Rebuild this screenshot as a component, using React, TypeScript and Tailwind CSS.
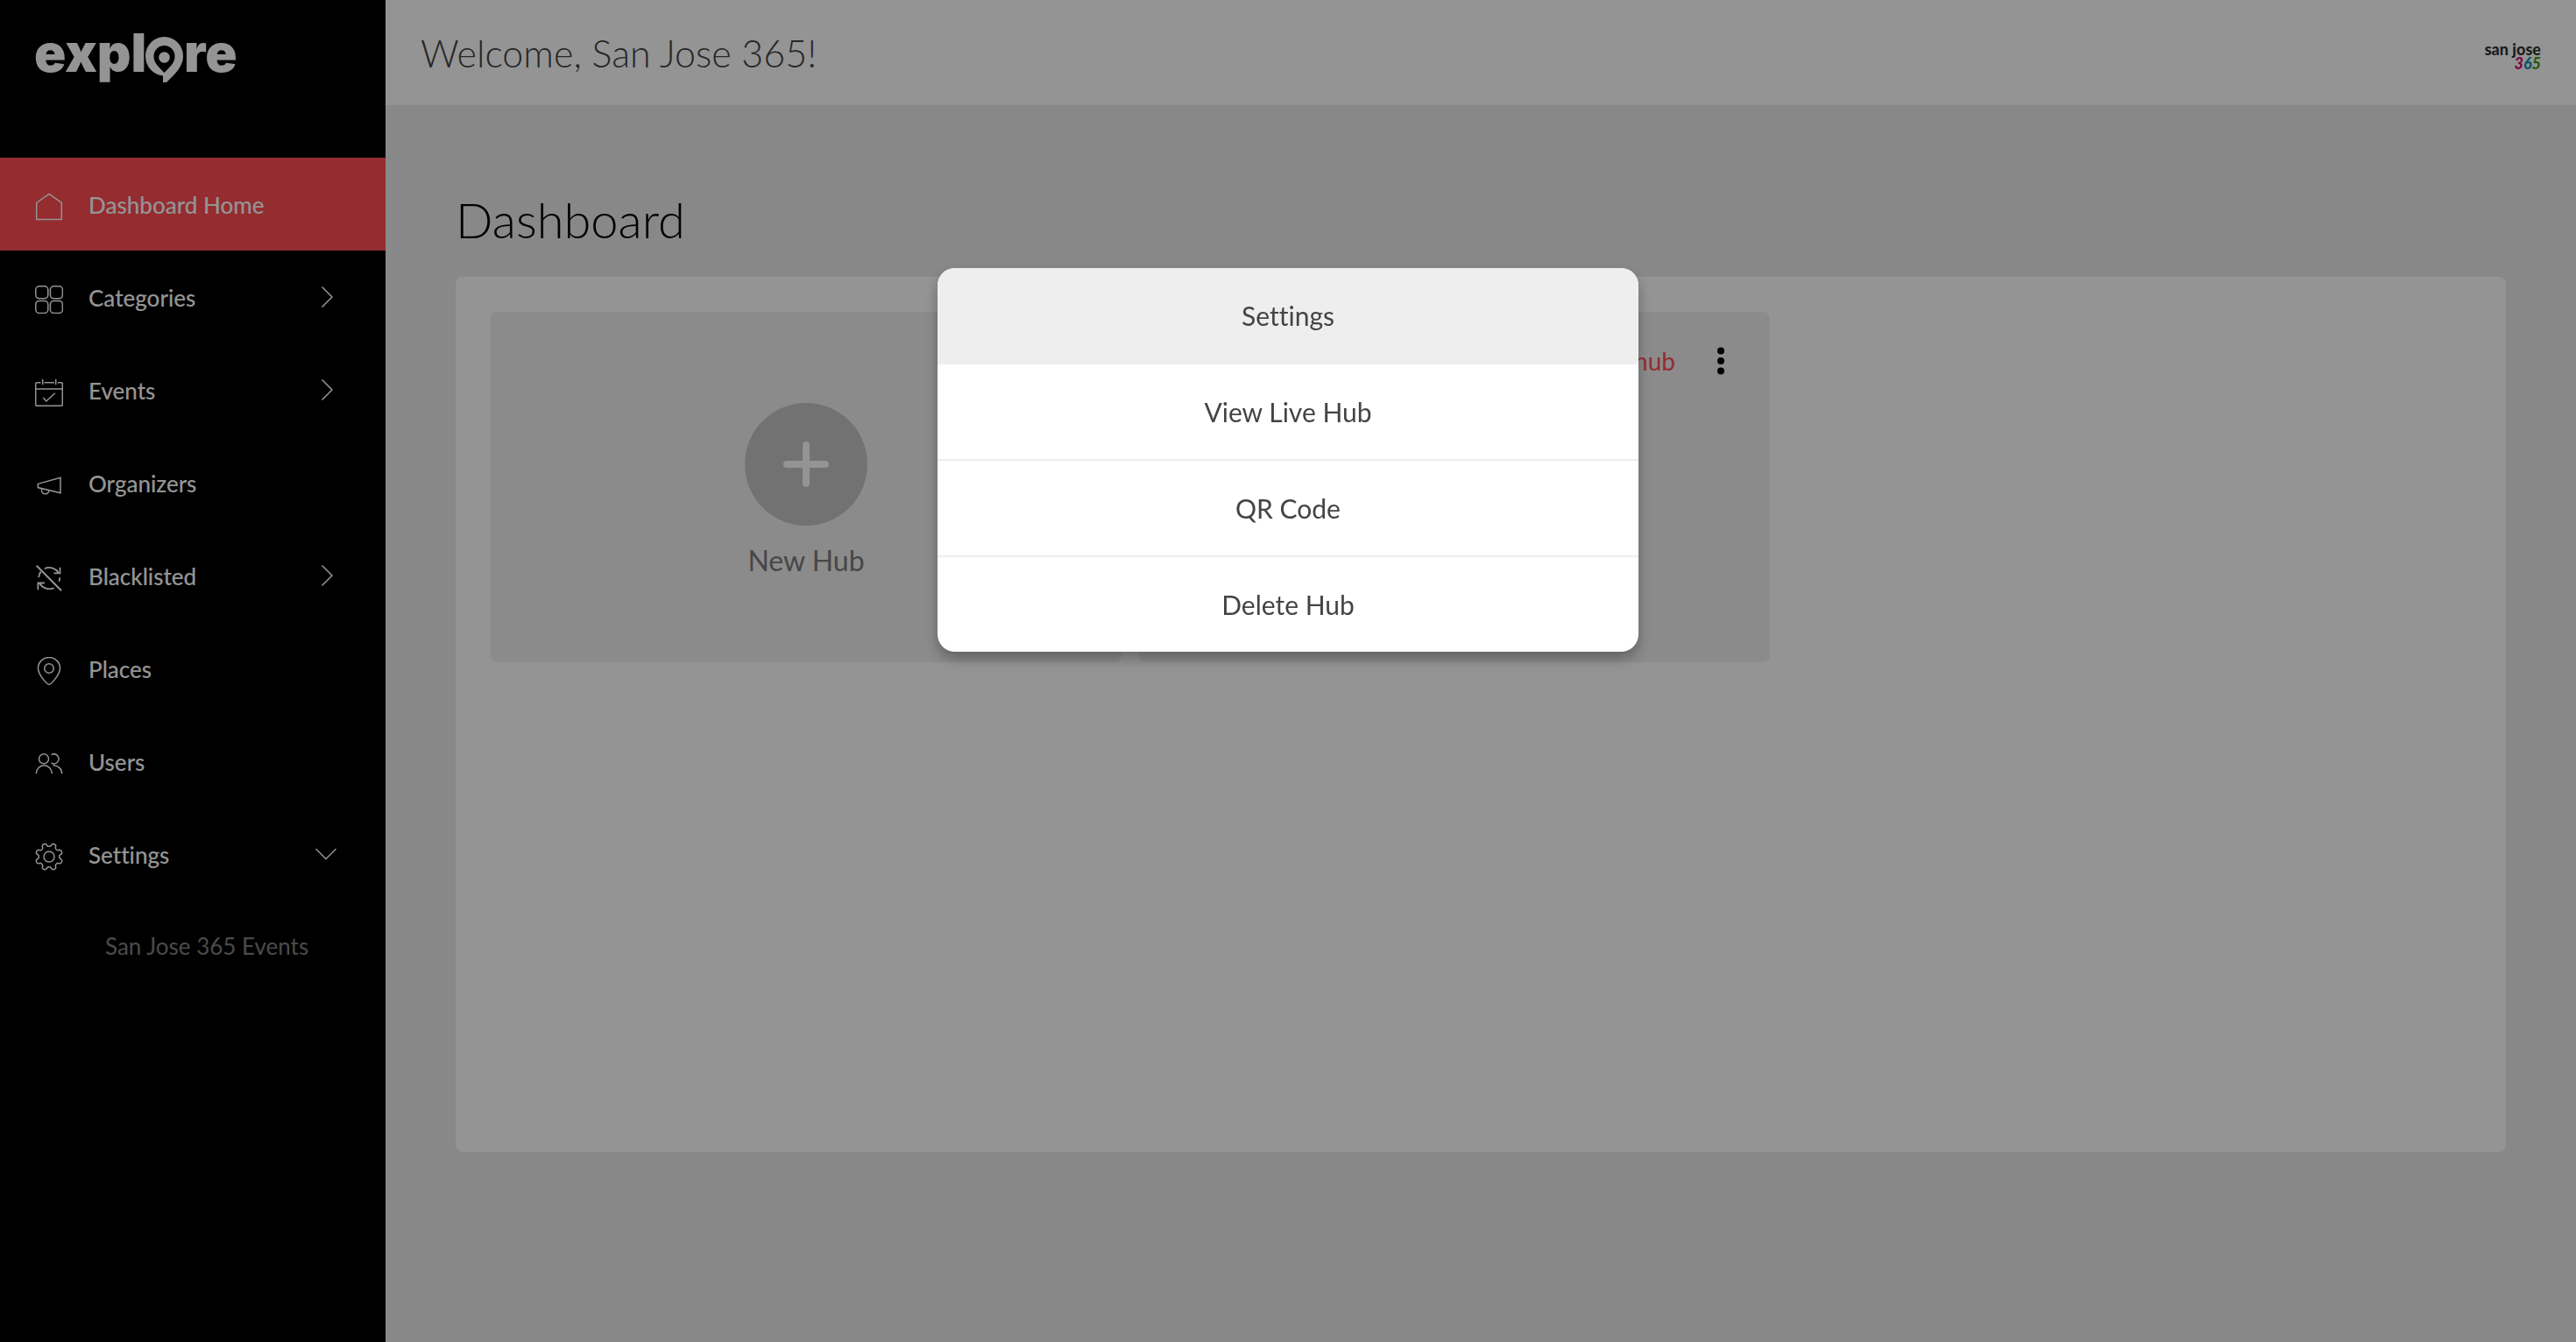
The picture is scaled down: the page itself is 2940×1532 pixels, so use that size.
import React from 'react';

// Eight rounded teeth around the centre of a 32px box
const gearPath =
  Array.from({ length: 144 }, (_, i) => {
    const angle = (i / 144) * Math.PI * 2;
    const radius = 13.6 - 1.9 * Math.tanh(2.2 * Math.cos(angle * 8));
    const x = 16 + radius * Math.sin(angle);
    const y = 16 - radius * Math.cos(angle);
    return `${i === 0 ? 'M' : 'L'}${x.toFixed(2)} ${y.toFixed(2)}`;
  }).join('') + 'Z';

const icons = {
  home: <path d="M1.7 11.5 16 1.3l14.3 10.2v19H1.7z" />,
  grid: (
    <>
      <rect x="0.8" y="0.8" width="14" height="14" rx="4" />
      <rect x="17.4" y="0.8" width="14" height="14" rx="4" />
      <rect x="0.8" y="17.4" width="14" height="14" rx="4" />
      <rect x="17.4" y="17.4" width="14" height="14" rx="4" />
    </>
  ),
  calendar: (
    <>
      <path d="M6.5 4.7H2.2A1.5 1.5 0 0 0 .7 6.2v23.6a1.5 1.5 0 0 0 1.5 1.5h27.6a1.5 1.5 0 0 0 1.5-1.5V6.2a1.5 1.5 0 0 0-1.5-1.5h-4M10.5 4.7h11.5M.7 12h30.6" />
      <path d="M8.7.7v6.6M23.7.7v6.6M9.3 22l3.5 4 10-9.3" />
    </>
  ),
  horn: (
    <>
      <path d="M3.3 14.4 29 7.3v17.4L3.3 18.6z" />
      <path d="M7.5 19.8v1.5a4.2 4.2 0 0 0 8.3 1.2v-.8" />
    </>
  ),
  blocked: (
    <>
      <path d="M1.7 1.7 30 30.3" strokeWidth="2" />
      <path d="M10.8 5.2C16.5 2.4 23 4.4 26.6 9.6M28.5 3.7v6.6h-7M4.2 15.2c.2-2.6 1-4.8 2.4-6.6" strokeWidth="1.8" />
      <path d="M21.6 27.2C15.5 30 8.5 27.5 5.2 22M3.4 29.3V21.5h7.5M28.2 15.2c0 1.8-.3 3.4-.9 4.8" strokeWidth="1.8" />
    </>
  ),
  pin: (
    <>
      <path d="M16 31.5C14.2 31.5 3.5 20.8 3.5 12.8a12.5 12.3 0 0 1 25 0C28.5 20.8 17.8 31.5 16 31.5z" />
      <circle cx="16" cy="13" r="5.3" />
    </>
  ),
  users: (
    <>
      <circle cx="10" cy="10.3" r="5.5" />
      <path d="M1.3 27.2a9 9.5 0 0 1 18 0M18.6 5.6a5.5 5.5 0 1 1 0 9.4M20.5 17.7a9.8 9.5 0 0 1 10.2 9.5" />
    </>
  ),
  gear: (
    <>
      <path d={gearPath} />
      <circle cx="16" cy="16" r="6" />
    </>
  ),
};

type NavItem = {
  label: string;
  icon: keyof typeof icons;
  active?: boolean;
  arrow?: 'right' | 'down';
};

const navItems: NavItem[] = [
  { label: 'Dashboard Home', icon: 'home', active: true },
  { label: 'Categories', icon: 'grid', arrow: 'right' },
  { label: 'Events', icon: 'calendar', arrow: 'right' },
  { label: 'Organizers', icon: 'horn' },
  { label: 'Blacklisted', icon: 'blocked', arrow: 'right' },
  { label: 'Places', icon: 'pin' },
  { label: 'Users', icon: 'users' },
  { label: 'Settings', icon: 'gear', arrow: 'down' },
];

const menuItems = ['Settings', 'View Live Hub', 'QR Code', 'Delete Hub'];

function Logo() {
  return (
    <a href="#home" aria-label="explore" className="block w-[240px] text-white">
      <svg viewBox="-4 -16 240 88" className="w-full" fill="currentColor">
        <text x="-1" y="48" className="font-['Inter',sans-serif] text-[60px] font-black">
          expl
        </text>
        <text x="170" y="48" className="font-['Inter',sans-serif] text-[60px] font-black">
          re
        </text>
        <path
          fillRule="evenodd"
          d="M147.5 8a21.5 22 0 0 1 21.5 22c0 9-5.5 16-10 21l-9 9h-4v-7.5A22 22.5 0 0 1 126 30 21.5 22 0 0 1 147.500 8zm0 10a12 12 0 0 0-12 12.5c0 7.500 6 12 12 18.500 6-6.500 12-11 12-18.500a12 12 0 0 0-12-12.500z"
        />
        <circle cx="147.5" cy="31.5" r="6.3" />
      </svg>
    </a>
  );
}

function Sidebar() {
  return (
    <aside className="w-[440px] shrink-0 bg-black text-[26px] text-white">
      <div className="h-[180px] px-9 pt-[18px]">
        <Logo />
      </div>
      <nav>
        {navItems.map((item) => (
          <a
            key={item.label}
            href="#nav"
            className={`flex h-[106px] items-center pr-14 pl-10 ${item.active ? 'bg-[#ff4c53]' : ''}`}
          >
            <svg
              viewBox="0 0 32 32"
              className="mt-1.5 mr-[29px] size-8 shrink-0"
              fill="none"
              stroke="currentColor"
              strokeWidth="1.5"
            >
              {icons[item.icon]}
            </svg>
            <span className="flex-1 pt-0.5 font-medium">{item.label}</span>
            {item.arrow && (
              <svg viewBox="0 0 24 24" className="size-6" fill="none" stroke="currentColor" strokeWidth="1.5">
                <path d={item.arrow === 'right' ? 'M7.5.5 19 12 7.5 23.5' : 'M.5 6 12 17.5 23.5 6'} />
              </svg>
            )}
          </a>
        ))}
        <a href="#events" className="flex h-[104px] items-center pl-[120px] text-[#808080]">
          San Jose 365 Events
        </a>
      </nav>
    </aside>
  );
}

function Header() {
  return (
    <header className="flex h-[120px] items-center justify-between bg-white px-10">
      <p className="pt-0.5 text-[43px] font-light text-[#444]">Welcome, San Jose 365!</p>
      <div className="flex flex-col items-end pt-2 text-[18px] leading-4 font-black">
        <span className="text-[#333]">san jose</span>
        <span className="italic">
          <span className="text-[#d0107c]">3</span>
          <span className="text-[#168fae]">6</span>
          <span className="text-[#3f9c22]">5</span>
        </span>
      </div>
    </header>
  );
}

function Hubs() {
  return (
    <main className="px-20 pt-[92px]">
      <h1 className="text-[56px] leading-[78px] font-light text-black">Dashboard</h1>
      <section className="mt-[26px] flex min-h-[999px] items-start gap-5 rounded-lg bg-white p-10">
        <button className="flex h-[400px] w-[720px] flex-col items-center rounded-lg bg-[#f0f0f0] pt-[104px] text-[#7a7a7a]">
          <span className="flex size-[140px] items-center justify-center rounded-full bg-[#c4c4c4] text-white">
            <svg viewBox="0 0 52 52" className="size-13" stroke="currentColor" strokeWidth="8" strokeLinecap="round">
              <path d="M26 4v44M4 26h44" />
            </svg>
          </span>
          <span className="mt-5 text-[32px] leading-[40px]">New Hub</span>
        </button>
        <article className="flex h-[400px] w-[720px] items-start justify-end gap-9 rounded-lg bg-[#f0f0f0] py-9 pr-10">
          <h2 className="text-[28px] leading-[40px] text-[#ff4c53]">hub</h2>
          <button aria-label="Hub menu" className="flex h-10 w-8 items-center justify-center">
            <svg viewBox="0 0 8 32" className="h-8 w-2">
              <circle cx="4" cy="4.5" r="4" />
              <circle cx="4" cy="16" r="4" />
              <circle cx="4" cy="27.5" r="4" />
            </svg>
          </button>
        </article>
      </section>
    </main>
  );
}

export default function App() {
  return (
    <div className="flex min-h-screen bg-[#ebebeb] font-['Lato',sans-serif] [font-variant-ligatures:no-common-ligatures]">
      <Sidebar />
      <div className="flex-1">
        <Header />
        <Hubs />
      </div>

      {/* Hub actions */}
      <div className="fixed inset-0 flex items-start justify-center bg-black/42 pt-[306px]">
        <div
          role="dialog"
          aria-label="Hub actions"
          className="w-[800px] overflow-hidden rounded-[20px] bg-white shadow-[0_8px_16px_rgba(0,0,0,0.3)]"
        >
          {menuItems.map((label, index) => (
            <button
              key={label}
              className={`block h-[110px] w-full border-b-2 border-[#eee] text-[30px] text-[#444] last:h-[108px] last:border-b-0 ${index === 0 ? 'bg-[#eee]' : ''}`}
            >
              {label}
            </button>
          ))}
        </div>
      </div>
    </div>
  );
}
